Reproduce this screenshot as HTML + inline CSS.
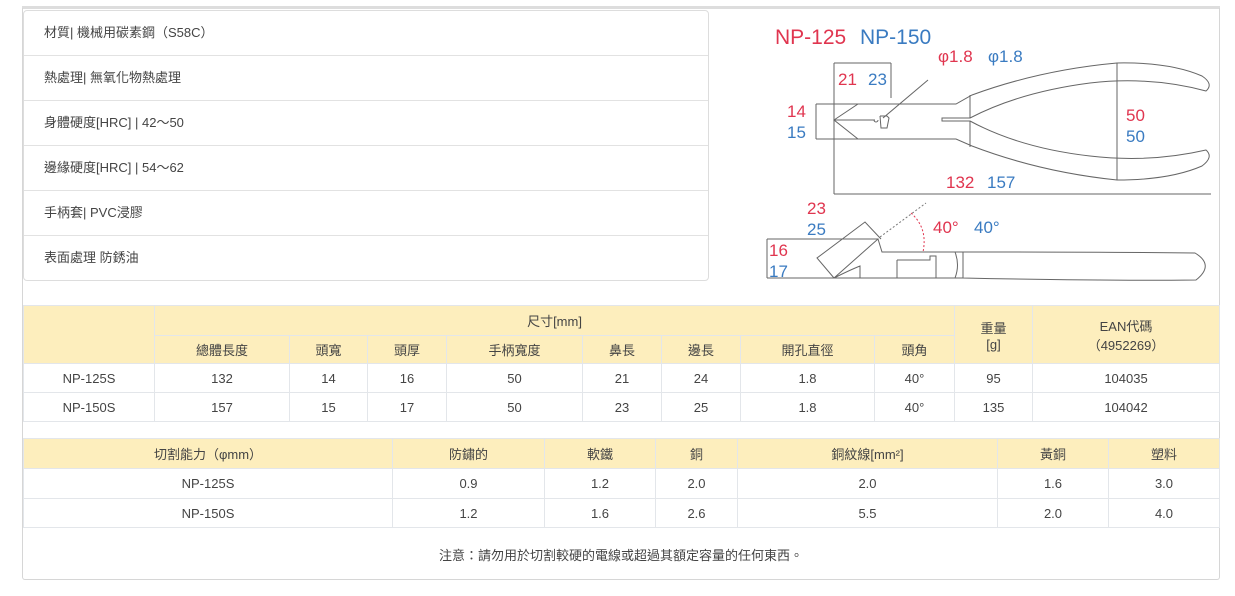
<!DOCTYPE html>
<html><head><meta charset="utf-8"><style>
body{margin:0;background:#fff;font-family:"Liberation Sans","Noto Sans CJK TC",sans-serif;color:#444;font-size:13px;width:1235px;height:596px;overflow:hidden;position:relative}
.top{position:absolute;left:22px;top:6px;width:1198px;height:3px;background:#ddd}
.outer{position:absolute;left:22px;top:8px;width:1196px;height:571px;border:1px solid #d6d6d6;border-top:none;border-radius:0 0 3px 3px}
.spec{position:absolute;left:23px;top:10px;width:684px;height:269px;border:1px solid #ddd;border-radius:4px}
.spec div{height:45px;line-height:44px;padding-left:20px;border-bottom:1px solid #e2e2e2;box-sizing:border-box}
.spec div:last-child{border-bottom:none}
table{position:absolute;border-collapse:collapse;left:23px;width:1196px;table-layout:fixed}
td{border:1px solid #e3e6ea;text-align:center;padding:0;font-size:13px}
.h td{background:#fdeebd}
svg{position:absolute;left:0;top:0}
svg text{font-family:"Liberation Sans",sans-serif}
.r{fill:#e0354f}.b{fill:#3a7bc1}
</style></head><body>
<div class="top"></div><div class="outer"></div>
<div class="spec">
<div>材質| 機械用碳素鋼（S58C）</div>
<div>熱處理| 無氧化物熱處理</div>
<div>身體硬度[HRC] | 42～50</div>
<div>邊緣硬度[HRC] | 54～62</div>
<div>手柄套| PVC浸膠</div>
<div>表面處理 防銹油</div>
</div>
<svg width="1235" height="300" viewBox="0 0 1235 300">
<text x="775" y="44" font-size="21" class="r">NP-125</text><text x="860" y="44" font-size="21" class="b">NP-150</text>
<text x="938" y="62" font-size="17" class="r">φ1.8</text><text x="988" y="62" font-size="17" class="b">φ1.8</text>
<text x="838" y="85" font-size="17" class="r">21</text><text x="868" y="85" font-size="17" class="b">23</text>
<text x="787" y="117" font-size="17" class="r">14</text><text x="787" y="138" font-size="17" class="b">15</text>
<text x="1126" y="121" font-size="17" class="r">50</text><text x="1126" y="142" font-size="17" class="b">50</text>
<text x="946" y="188" font-size="17" class="r">132</text><text x="987" y="188" font-size="17" class="b">157</text>
<text x="807" y="214" font-size="17" class="r">23</text><text x="807" y="235" font-size="17" class="b">25</text>
<text x="933" y="233" font-size="17" class="r">40°</text><text x="974" y="233" font-size="17" class="b">40°</text>
<text x="769" y="256" font-size="17" class="r">16</text><text x="769" y="277" font-size="17" class="b">17</text>
<g fill="none" stroke="#666" stroke-width="1">
<path d="M834 63H891M834 63V194M891 63V98M816 104V139M816 104H858M816 139H858M834 194H1211M1117 63V180"/>
<path d="M834 120L858 104H956L972 95Q1040 70 1117 63Q1170 62 1202 76Q1214 84 1206 91Q1150 76 1090 83Q1020 92 970 118H942V121H970Q1020 148 1090 156Q1150 163 1206 150Q1214 157 1202 166Q1170 180 1117 180Q1040 172 972 146L956 139H858L834 120Z"/>
<path d="M834 120H875M880 116H887L889 118L887 128H881L880 116M874 120A2 2 0 1 0 878 120M928 80L883 118M970 95V118M970 121V147"/>
<path d="M767 239H878M767 239V278M767 278H834M834 278L878 239L882 252H963Q1100 252 1195 253Q1215 265 1196 280Q1100 281 963 278H834Q850 270 860 266V278M834 278L817 258L865 222L881 239M897 260H930V256H936V278M897 260V278M955 252Q960 265 955 278M963 252V278"/>
</g>
<path d="M880 237L926 203" stroke="#777" stroke-dasharray="2,2" fill="none"/>
<path d="M911 213Q928 228 923 252" stroke="#e0354f" stroke-dasharray="2,2" fill="none"/>
</svg>
<table style="top:305px">
<colgroup><col style="width:131px"><col style="width:135px"><col style="width:78px"><col style="width:79px"><col style="width:136px"><col style="width:79px"><col style="width:79px"><col style="width:134px"><col style="width:80px"><col style="width:78px"><col style="width:187px"></colgroup>
<tr class="h" style="height:30px"><td rowspan="2"></td><td colspan="8">尺寸[mm]</td><td rowspan="2">重量<br>[g]</td><td rowspan="2">EAN代碼<br>（4952269）</td></tr>
<tr class="h" style="height:28px"><td>總體長度</td><td>頭寬</td><td>頭厚</td><td>手柄寬度</td><td>鼻長</td><td>邊長</td><td>開孔直徑</td><td>頭角</td></tr>
<tr style="height:29px"><td>NP-125S</td><td>132</td><td>14</td><td>16</td><td>50</td><td>21</td><td>24</td><td>1.8</td><td>40°</td><td>95</td><td>104035</td></tr>
<tr style="height:29px"><td>NP-150S</td><td>157</td><td>15</td><td>17</td><td>50</td><td>23</td><td>25</td><td>1.8</td><td>40°</td><td>135</td><td>104042</td></tr>
</table>
<table style="top:438px">
<colgroup><col style="width:369px"><col style="width:152px"><col style="width:111px"><col style="width:82px"><col style="width:260px"><col style="width:111px"><col style="width:111px"></colgroup>
<tr class="h" style="height:30px"><td>切割能力（φmm）</td><td>防鏽的</td><td>軟鐵</td><td>銅</td><td>銅紋線[mm²]</td><td>黃銅</td><td>塑料</td></tr>
<tr style="height:30px"><td>NP-125S</td><td>0.9</td><td>1.2</td><td>2.0</td><td>2.0</td><td>1.6</td><td>3.0</td></tr>
<tr style="height:29px"><td>NP-150S</td><td>1.2</td><td>1.6</td><td>2.6</td><td>5.5</td><td>2.0</td><td>4.0</td></tr>
</table>
<div style="position:absolute;left:22px;width:1198px;top:545px;text-align:center;font-size:13px">注意：請勿用於切割較硬的電線或超過其額定容量的任何東西。</div>
</body></html>
